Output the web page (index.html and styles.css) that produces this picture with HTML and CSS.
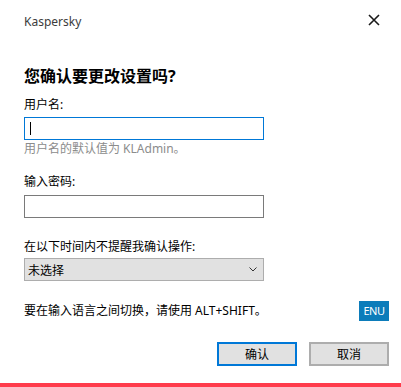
FILE: index.html
```html
<!DOCTYPE html>
<html lang="zh-CN">
<head>
    <meta charset="UTF-8">
    <meta name="viewport" content="width=device-width, initial-scale=1.0">
    <link rel="stylesheet" href="styles.css">
    <title>Kaspersky</title>
</head>
<body>

    <div class="dialog">
        <div class="titlebar">
            <span class="app-name">Kaspersky</span>
            <svg class="close" width="12" height="12" viewBox="0 0 12 12">
                <path d="M1 1 L11 11 M11 1 L1 11" stroke="#1a1a1a" stroke-width="1.6" fill="none"/>
            </svg>
        </div>

        <h1 class="heading">您确认要更改设置吗?</h1>

        <label class="label first">用户名:</label>
        <div class="field active"><span class="caret"></span></div>
        <p class="hint">用户名的默认值为 KLAdmin。</p>

        <label class="label second">输入密码:</label>
        <div class="field password"></div>

        <label class="label third">在以下时间内不提醒我确认操作:</label>
        <div class="select">
            <span>未选择</span>
            <svg width="8" height="5" viewBox="0 0 8 5">
                <path d="M0.5 0.5 L4 4 L7.5 0.5" stroke="#333" stroke-width="1" fill="none"/>
            </svg>
        </div>

        <div class="lang-row">
            <span>要在输入语言之间切换，请使用 ALT+SHIFT。</span>
            <span class="lang">ENU</span>
        </div>

        <div class="buttons">
            <button class="btn primary">确认</button>
            <button class="btn">取消</button>
        </div>
    </div>

    <div class="brand-bar"></div>

</body>
</html>
```

FILE: styles.css
```css
body {
    margin: 0;
    background-color: #fff;
    font-family: "Noto Sans", "Noto Sans CJK SC", sans-serif;
    font-size: 12px;
    color: #000;
}

.dialog {
    padding: 14px 12px 0 24px;
}

.titlebar {
    display: flex;
    justify-content: space-between;
    align-items: flex-start;
    height: 16px;
    padding-right: 9px;
}

.app-name {
    line-height: 16px;
    color: #3c3c3c;
}

.close {
    display: block;
}

.heading {
    margin: 36px 0 0;
    font-size: 16px;
    line-height: 20px;
    font-weight: bold;
}

.label {
    display: block;
    line-height: 16px;
}

.label.first {
    margin-top: 11px;
}

.label.second {
    margin-top: 17px;
}

.label.third {
    margin-top: 21px;
}

.field {
    width: 240px;
    height: 23px;
    margin-top: 4px;
    border: 1px solid #7a7a7a;
    box-sizing: border-box;
    display: flex;
    align-items: center;
    padding-left: 5px;
}

.field.active {
    border-color: #0078d7;
}

.field.password {
    margin-top: 5px;
}

.caret {
    width: 1px;
    height: 13px;
    background-color: #000;
}

.hint {
    margin: 1px 0 0;
    line-height: 16px;
    color: #8c8c8c;
}

.select {
    width: 240px;
    height: 23px;
    margin-top: 3px;
    border: 1px solid #adadad;
    background-color: #e1e1e1;
    box-sizing: border-box;
    display: flex;
    align-items: center;
    justify-content: space-between;
    padding: 0 6px 0 3px;
}

.select svg {
    display: block;
}

.lang-row {
    display: flex;
    justify-content: space-between;
    align-items: center;
    margin-top: 20px;
    line-height: 16px;
}

.lang {
    width: 30px;
    height: 20px;
    line-height: 20px;
    text-align: center;
    background-color: #0c7cba;
    color: #fff;
    font-size: 11px;
    letter-spacing: -0.5px;
}

.buttons {
    display: flex;
    justify-content: flex-end;
    gap: 12px;
    margin-top: 21px;
}

.btn {
    width: 80px;
    height: 24px;
    background-color: #e1e1e1;
    border: 2px solid #adadad;
    font-family: "Noto Sans", "Noto Sans CJK SC", sans-serif;
    font-size: 12px;
    color: #000;
    padding: 0;
}

.btn.primary {
    border-color: #0078d7;
}

.brand-bar {
    height: 4px;
    margin-top: 17px;
    background-color: #ff3c4c;
}
```
